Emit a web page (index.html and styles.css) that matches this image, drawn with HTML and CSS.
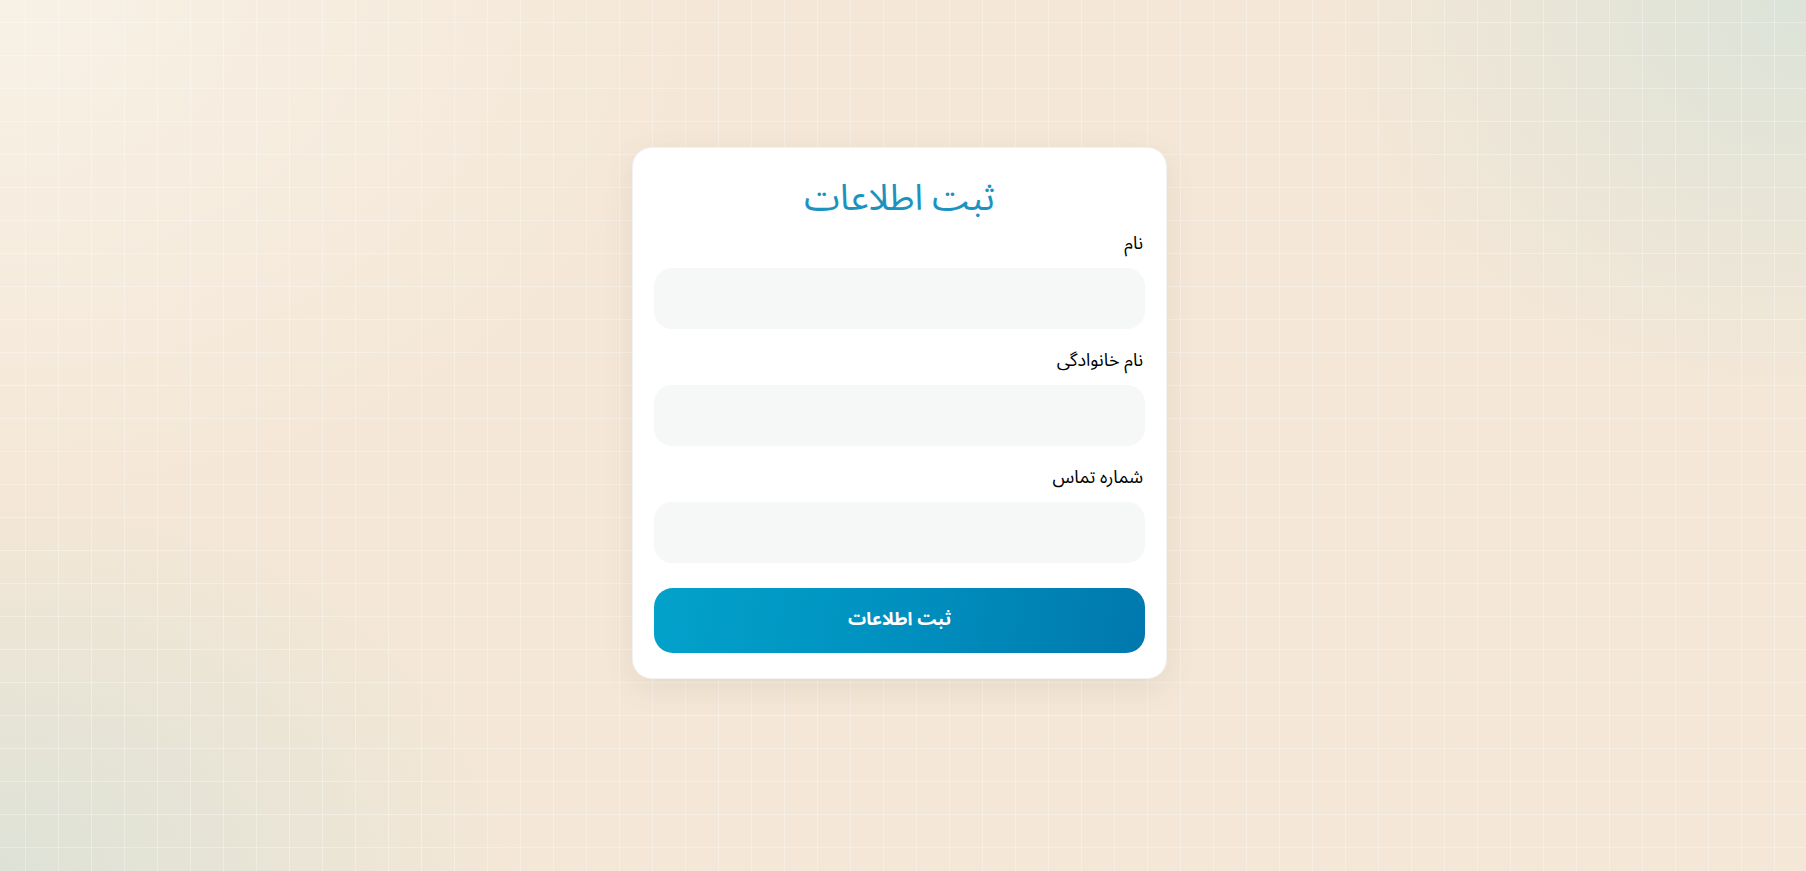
FILE: index.html
```html
<!DOCTYPE html>
<html lang="fa" dir="rtl">
<head>
<meta charset="utf-8">
<title>ثبت اطلاعات</title>
<link rel="stylesheet" href="styles.css">
</head>
<body>
<main class="page">
  <form class="card">
    <h1 class="title">ثبت اطلاعات</h1>
    <div class="field">
      <label class="label" for="fname">نام</label>
      <input class="input" id="fname" type="text">
    </div>
    <div class="field">
      <label class="label" for="lname">نام خانوادگی</label>
      <input class="input" id="lname" type="text">
    </div>
    <div class="field">
      <label class="label" for="phone">شماره تماس</label>
      <input class="input" id="phone" type="text">
    </div>
    <button class="submit" type="button">ثبت اطلاعات</button>
  </form>
</main>
</body>
</html>
```
FILE: styles.css
```css
* { box-sizing: border-box; }
html, body { margin: 0; height: 100%; }
body {
  font-family: "Noto Sans Arabic", "DejaVu Sans", sans-serif;
  background-color: #f4e7d7;
  background-image:
    linear-gradient(to right, rgba(255,255,255,0.3) 1px, transparent 1px),
    linear-gradient(to bottom, rgba(255,255,255,0.3) 1px, transparent 1px),
    radial-gradient(ellipse 480px 400px at 100% 0%, #dce3d8 0%, rgba(220,227,216,0.6) 45%, rgba(244,231,215,0) 100%),
    radial-gradient(ellipse 520px 380px at 0% 100%, #dee2d6 0%, rgba(222,226,214,0.6) 45%, rgba(244,231,215,0) 100%),
    radial-gradient(ellipse 700px 500px at 0% 0%, #f8f1e6 0%, rgba(248,241,230,0) 100%);
  background-size: 33px 33px, 33px 33px, 100% 100%, 100% 100%, 100% 100%;
  background-position: 25px 0, 0 22px, 0 0, 0 0, 0 0;
}
.page {
  height: 100%;
  display: flex;
  justify-content: center;
  align-items: flex-start;
  padding-top: 147px;
  padding-right: 7px;
}
.card {
  width: 535px;
  background: #ffffff;
  border-radius: 20px;
  border: 1px solid rgba(0,0,0,0.05);
  box-shadow: 0 10px 30px rgba(120, 100, 70, 0.10);
  padding: 21px 21px 25px;
  display: flex;
  flex-direction: column;
}
.title {
  margin: 5px 0 7px;
  text-align: center;
  font-size: 36px;
  line-height: 50px;
  font-weight: 400;
  color: #1a93c0;
}
.field {
  display: flex;
  flex-direction: column;
  margin-bottom: 19px;
}
.field:last-of-type { margin-bottom: 25px; }
.label {
  font-size: 18px;
  line-height: 24px;
  color: #000;
  margin: 0 2px 13px;
  text-align: right;
}
.input {
  height: 61px;
  border: none;
  border-radius: 18px;
  background: #f6f7f7;
  outline: none;
  font: inherit;
  padding: 0 16px;
}
.submit {
  height: 65px;
  border: none;
  border-radius: 19px;
  background: linear-gradient(100deg, #02a2cb 0%, #0090bf 50%, #0078ae 100%);
  color: #ffffff;
  font-family: inherit;
  font-size: 18px;
  font-weight: 700;
  padding: 0 0 4px;
  cursor: pointer;
}
```
